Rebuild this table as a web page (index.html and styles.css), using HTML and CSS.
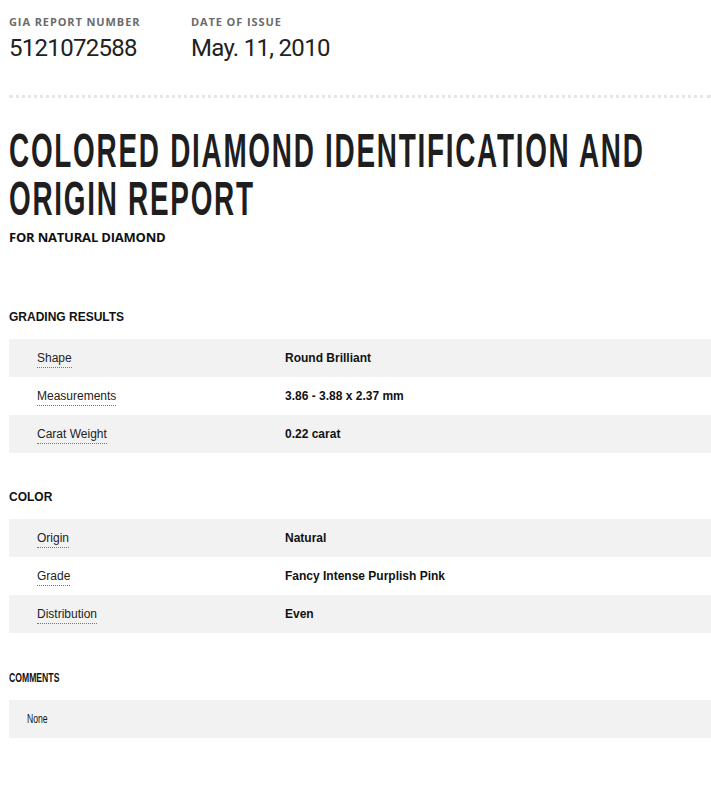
FILE: index.html
```html
<!DOCTYPE html>
<html lang="en">
<head>
<meta charset="utf-8">
<title>GIA Report 5121072588</title>
<link rel="stylesheet" href="styles.css">
</head>
<body>
<div class="page">
  <div class="meta">
    <div class="meta-item meta-item--first">
      <div class="meta-label">GIA REPORT NUMBER</div>
      <div class="meta-value">5121072588</div>
    </div>
    <div class="meta-item">
      <div class="meta-label">DATE OF ISSUE</div>
      <div class="meta-value">May. 11, 2010</div>
    </div>
  </div>
  <div class="rule"></div>
  <h1 class="title"><span class="title-text">COLORED DIAMOND IDENTIFICATION AND<br>ORIGIN REPORT</span></h1>
  <div class="subtitle">FOR NATURAL DIAMOND</div>

  <section class="section section--first">
    <h2 class="section-title">GRADING RESULTS</h2>
    <div class="rows">
      <div class="row"><div class="cell-label"><span class="term">Shape</span></div><div class="cell-value">Round Brilliant</div></div>
      <div class="row"><div class="cell-label"><span class="term">Measurements</span></div><div class="cell-value">3.86 - 3.88 x 2.37 mm</div></div>
      <div class="row"><div class="cell-label"><span class="term">Carat Weight</span></div><div class="cell-value">0.22 carat</div></div>
    </div>
  </section>

  <section class="section">
    <h2 class="section-title">COLOR</h2>
    <div class="rows">
      <div class="row"><div class="cell-label"><span class="term">Origin</span></div><div class="cell-value">Natural</div></div>
      <div class="row"><div class="cell-label"><span class="term">Grade</span></div><div class="cell-value">Fancy Intense Purplish Pink</div></div>
      <div class="row"><div class="cell-label"><span class="term">Distribution</span></div><div class="cell-value">Even</div></div>
    </div>
  </section>

  <section class="section section--comments">
    <h2 class="section-title"><span class="narrow">COMMENTS</span></h2>
    <div class="rows">
      <div class="row row--comment"><span class="narrow">None</span></div>
    </div>
  </section>
</div>
</body>
</html>
```

FILE: styles.css
```css
html, body {
  margin: 0;
  padding: 0;
  background: #ffffff;
}

.page {
  padding: 14px 0 40px 9px;
  font-family: "Liberation Sans", Arial, sans-serif;
  color: #111;
}

.meta {
  display: flex;
}

.meta-item--first {
  width: 182px;
}

.meta-label {
  font-family: "Open Sans", sans-serif;
  font-weight: 700;
  font-size: 11px;
  line-height: 15px;
  letter-spacing: 0.9px;
  color: #6b6b6b;
}

.meta-value {
  margin-top: 5px;
  font-family: Roboto, sans-serif;
  font-size: 24px;
  line-height: 28px;
  letter-spacing: -0.7px;
  color: #222;
}

.rule {
  margin-top: 33px;
  border-top: 3px dotted #e6e6e6;
}

.title {
  margin: 29px 0 0;
  font-family: "Liberation Sans", Arial, sans-serif;
  font-weight: 700;
  font-size: 48px;
  line-height: 48px;
  letter-spacing: 3px;
  color: #1e1e1e;
  white-space: nowrap;
  overflow: hidden;
}

.title-text {
  display: inline-block;
  transform: scaleX(0.581);
  transform-origin: left top;
}

.subtitle {
  margin-top: 6px;
  font-family: "Open Sans", sans-serif;
  font-weight: 700;
  font-size: 13px;
  line-height: 16px;
  letter-spacing: -0.2px;
  color: #111;
}

.section {
  margin-top: 37px;
}

.section--first {
  margin-top: 65px;
}

.section--comments {
  margin-top: 38px;
}

.section-title {
  margin: 0 0 15px;
  font-size: 12px;
  line-height: 14px;
  font-weight: 700;
  color: #111;
}

.narrow {
  display: inline-block;
  transform: scaleX(0.72);
  transform-origin: left center;
}

.row {
  display: flex;
  align-items: center;
  height: 38px;
  font-size: 12px;
  line-height: 14px;
}

.row:nth-child(odd) {
  background: #f2f2f2;
}

.cell-label {
  width: 248px;
  padding-left: 28px;
  color: #222;
}

.term {
  display: inline-block;
  padding: 2px 0;
  border-bottom: 1px dotted #777;
}

.cell-value {
  font-weight: 700;
  color: #111;
}

.row--comment {
  padding-left: 18px;
  font-size: 12px;
  color: #111;
}
```
